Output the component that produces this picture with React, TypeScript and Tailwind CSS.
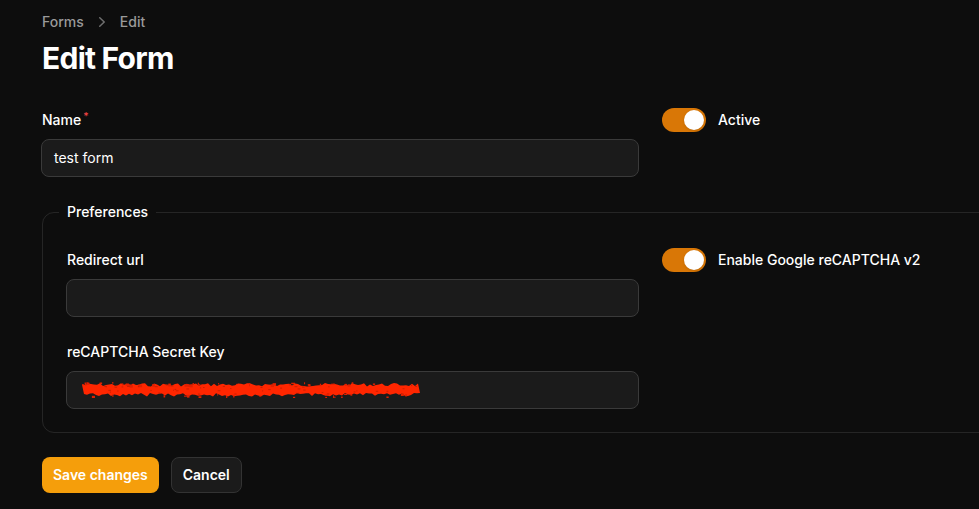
// deterministic jitter for the redaction scribble
const rand = (seed: number) => {
  let s = seed;
  return () => {
    s = (s * 9301 + 49297) % 233280;
    return s / 233280;
  };
};

const Scribble = () => {
  const r = rand(7);
  const top: string[] = [];
  const bottom: string[] = [];
  for (let x = 0; x <= 338; x += 3) {
    top.push(`${x},${(1 + r() * 3.5).toFixed(1)}`);
  }
  for (let x = 338; x >= 0; x -= 3) {
    bottom.push(`${x},${(11 + r() * 3.5).toFixed(1)}`);
  }
  const dots = Array.from({ length: 60 }, () => ({
    x: r() * 336,
    y: r() < 0.5 ? r() * 3 : 11 + r() * 4,
    w: 1 + r() * 3,
    h: 1 + r() * 2,
  }));
  return (
    <svg width="340" height="16" viewBox="0 0 340 16" className="block">
      <polygon points={[...top, ...bottom].join(" ")} fill="#ff2600" />
      {dots.map((d, i) => (
        <rect key={i} x={d.x} y={d.y} width={d.w} height={d.h} fill="#e02000" />
      ))}
      {Array.from({ length: 40 }, (_, i) => (
        <rect key={`d${i}`} x={r() * 336} y={3 + r() * 8} width={1 + r() * 2} height={1} fill="#b81c00" opacity="0.7" />
      ))}
    </svg>
  );
};

const Toggle = ({ label }: { label: string }) => (
  <div className="flex h-6 items-center gap-3">
    <div className="flex h-6 w-11 items-center rounded-full bg-[#d97706] px-0.5">
      <div className="ml-auto h-5 w-5 rounded-full bg-white shadow" />
    </div>
    <span className="text-sm font-medium leading-6 text-white">{label}</span>
  </div>
);

const Field = ({
  label,
  required,
  children,
}: {
  label: string;
  required?: boolean;
  children?: React.ReactNode;
}) => (
  <div className="flex flex-col gap-[7px]">
    <label className="text-sm font-medium leading-6 text-white">
      {label}
      {required && <sup className="ml-0.5 font-medium text-[#ef4444]">*</sup>}
    </label>
    <div className="-mx-px flex h-[38px] items-center rounded-lg border border-[#3a3a3a] bg-[#1b1b1b] px-3 text-sm text-white">
      {children}
    </div>
  </div>
);

export default function App() {
  return (
    <div className="min-h-screen w-full overflow-hidden bg-[#0d0d0d] font-['Inter',sans-serif]">
      <div className="ml-[42px] w-[1216px] pt-3">
        <nav className="flex h-5 items-center gap-2 text-sm font-medium text-[#9a9a9a]">
          <span>Forms</span>
          <svg width="20" height="20" viewBox="0 0 20 20" fill="#6e6e6e">
            <path
              fillRule="evenodd"
              d="M7.21 14.77a.75.75 0 0 1 .02-1.06L11.168 10 7.23 6.29a.75.75 0 1 1 1.04-1.08l4.5 4.25a.75.75 0 0 1 0 1.08l-4.5 4.25a.75.75 0 0 1-1.06-.02Z"
            />
          </svg>
          <span>Edit</span>
        </nav>
        <h1 className="mt-2 text-3xl font-bold leading-9 tracking-tight text-white">Edit Form</h1>

        <div className="mt-8 grid grid-cols-2 gap-6">
          <Field label="Name" required>
            test form
          </Field>
          <Toggle label="Active" />
        </div>

        <fieldset className="mt-[23px] rounded-xl border border-white/10 px-6 pb-[23px] pt-6">
          <legend className="-ml-2 px-2 text-sm font-medium leading-6 text-white">Preferences</legend>
          <div className="grid grid-cols-2 gap-6">
            <div className="flex flex-col gap-[23px]">
              <Field label="Redirect url" />
              <Field label="reCAPTCHA Secret Key">
                <div className="ml-[3px]">
                  <Scribble />
                </div>
              </Field>
            </div>
            <div>
              <Toggle label="Enable Google reCAPTCHA v2" />
            </div>
          </div>
        </fieldset>

        <div className="mt-6 flex gap-3">
          <button className="h-9 rounded-lg bg-[#f59e0b] px-[11px] text-sm font-semibold text-white">
            Save changes
          </button>
          <button className="h-9 rounded-lg border border-[#333] bg-[#1b1b1b] px-[11px] text-sm font-semibold text-white">
            Cancel
          </button>
        </div>
      </div>
    </div>
  );
}
